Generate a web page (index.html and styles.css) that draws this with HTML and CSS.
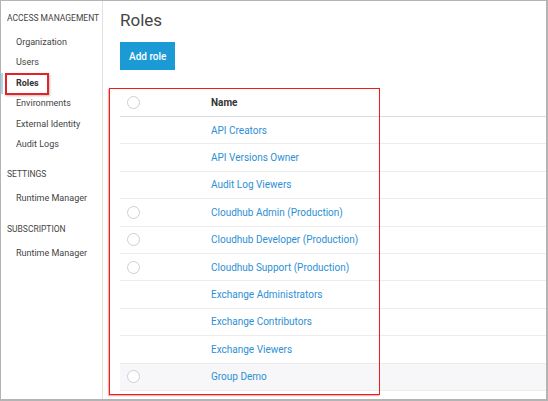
FILE: index.html
```html
<!DOCTYPE html>
<html lang="en">
<head>
    <meta charset="UTF-8">
    <meta name="viewport" content="width=device-width, initial-scale=1.0">
    <title>Roles</title>
    <link rel="stylesheet" href="styles.css">
</head>
<body>
    <div class="frame">
        <div class="sidebar">
            <div class="nav-section">
                <div class="nav-heading">Access Management</div>
                <div class="nav-item">Organization</div>
                <div class="nav-item">Users</div>
                <div class="nav-item active">Roles<span class="mark"></span></div>
                <div class="nav-item">Environments</div>
                <div class="nav-item">External Identity</div>
                <div class="nav-item">Audit Logs</div>
            </div>
            <div class="nav-section">
                <div class="nav-heading">Settings</div>
                <div class="nav-item">Runtime Manager</div>
            </div>
            <div class="nav-section">
                <div class="nav-heading">Subscription</div>
                <div class="nav-item">Runtime Manager</div>
            </div>
        </div>

        <div class="main">
            <h1>Roles</h1>
            <button class="button add" type="button">Add role</button>

            <div class="table-wrap">
                <table class="roles">
                    <thead>
                        <tr>
                            <th class="check"><span class="circle"></span></th>
                            <th>Name</th>
                        </tr>
                    </thead>
                    <tbody>
                        <tr><td class="check"></td><td><a href="#">API Creators</a></td></tr>
                        <tr><td class="check"></td><td><a href="#">API Versions Owner</a></td></tr>
                        <tr><td class="check"></td><td><a href="#">Audit Log Viewers</a></td></tr>
                        <tr><td class="check"><span class="circle"></span></td><td><a href="#">Cloudhub Admin (Production)</a></td></tr>
                        <tr><td class="check"><span class="circle"></span></td><td><a href="#">Cloudhub Developer (Production)</a></td></tr>
                        <tr><td class="check"><span class="circle"></span></td><td><a href="#">Cloudhub Support (Production)</a></td></tr>
                        <tr><td class="check"></td><td><a href="#">Exchange Administrators</a></td></tr>
                        <tr><td class="check"></td><td><a href="#">Exchange Contributors</a></td></tr>
                        <tr><td class="check"></td><td><a href="#">Exchange Viewers</a></td></tr>
                        <tr class="hover"><td class="check"><span class="circle"></span></td><td><a href="#">Group Demo</a></td></tr>
                    </tbody>
                </table>
                <div class="annot"></div>
            </div>
        </div>
    </div>
</body>
</html>
```

FILE: styles.css
```css
body {
    margin: 0;
    padding: 0;
    font-family: Roboto, 'Open Sans', sans-serif;
    color: #444;
    background: #fff;
}

.frame {
    display: flex;
    width: 548px;
    height: 401px;
    box-sizing: border-box;
    border: 1px solid #b4b4b4;
    border-right-width: 2px;
    border-bottom-width: 2px;
    overflow: hidden;
}

/* left navigation */
.sidebar {
    width: 101px;
    flex-shrink: 0;
    border-right: 1px solid #e2e2e2;
    padding-top: 10px;
}

.nav-section + .nav-section {
    margin-top: 13px;
}

.nav-heading {
    font-size: 8.5px;
    line-height: 14px;
    text-transform: uppercase;
    color: #444;
    padding-left: 6px;
    margin-bottom: 7px;
}

.nav-item {
    position: relative;
    font-size: 9px;
    line-height: 20.4px;
    padding-left: 15px;
    color: #444;
}

.nav-item.active {
    font-weight: bold;
    color: #333;
}

.nav-item.active::before {
    content: "";
    position: absolute;
    left: -1px;
    top: 0;
    width: 3px;
    height: 21px;
    background: #a9d7ef;
}

.nav-item .mark {
    position: absolute;
    left: 4px;
    top: 0;
    width: 40px;
    height: 18px;
    border: 2px solid #e3232a;
    box-shadow: 1px 1px 2px rgba(0, 0, 0, 0.25);
}

/* main content */
.main {
    flex: 1;
    padding-top: 8px;
    padding-left: 17px;
}

h1 {
    margin: 0 0 11px;
    font-size: 17px;
    line-height: 22px;
    font-weight: normal;
    color: #444;
}

.button {
    border: none;
    cursor: pointer;
    font-family: inherit;
}

.button.add {
    display: block;
    height: 28px;
    padding: 0 9px;
    background: #1b9ad6;
    color: #fff;
    font-size: 10px;
    font-weight: 500;
}

.table-wrap {
    position: relative;
    margin-top: 18px;
}

.roles {
    width: 100%;
    border-collapse: collapse;
}

.roles th,
.roles td {
    padding: 0;
    text-align: left;
    border-bottom: 1px solid #ececec;
    font-size: 10px;
}

.roles th {
    height: 28px;
    font-weight: bold;
    color: #333;
    border-bottom-color: #dcdcdc;
}

.roles td {
    height: 26.4px;
}

.roles .check {
    width: 91px;
    padding-left: 7px;
    box-sizing: border-box;
}

.circle {
    display: block;
    width: 11px;
    height: 11px;
    border: 1px solid #cfcfcf;
    border-radius: 50%;
    background: #fff;
}

.roles a {
    color: #2d8fd5;
    text-decoration: none;
}

.roles tr.hover td {
    background: #f7f7f9;
}

/* red annotation round the table */
.annot {
    position: absolute;
    left: -11px;
    top: 0;
    width: 269px;
    height: 305px;
    border: 1px solid #ee1c1c;
    box-shadow: -1px 1px 1px rgba(238, 28, 28, 0.35);
    pointer-events: none;
}
```
